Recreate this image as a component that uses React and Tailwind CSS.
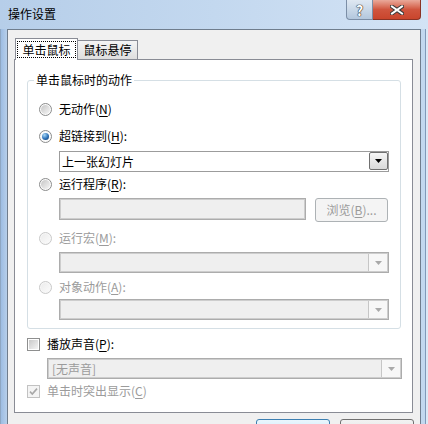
import React from "react";

// underlined access key letter
const Key = ({ children }) => (
  <span className="underline decoration-1 underline-offset-2">{children}</span>
);

const Radio = ({ checked, disabled }) => (
  <span
    className={`flex h-[13px] w-[13px] shrink-0 items-center justify-center rounded-full border ${
      disabled ? "border-[#c9c9c9] bg-[#f7f7f7]" : "border-[#8b8c8c] bg-[#fbfbfb]"
    }`}
  >
    {checked ? (
      <span className="h-[7px] w-[7px] rounded-full bg-[radial-gradient(circle_at_35%_30%,#a8d8f8,#2d72b8_55%,#0c2f58)]" />
    ) : (
      <span
        className={`h-[9px] w-[9px] rounded-full bg-gradient-to-br ${
          disabled ? "from-[#ececec] to-[#fafafa]" : "from-[#c6c6c6] to-[#f6f6f6]"
        }`}
      />
    )}
  </span>
);

const RadioRow = ({ children, checked, disabled, className }) => (
  <div
    className={`flex h-4 items-center gap-[7px] pl-[11px] ${
      disabled ? "text-[#9b9b9b]" : "text-black"
    } ${className}`}
  >
    <Radio checked={checked} disabled={disabled} />
    <span>{children}</span>
  </div>
);

const Arrow = ({ color }) => (
  <svg width="7" height="4" viewBox="0 0 7 4">
    <path d="M0 0h7L3.5 4z" fill={color} />
  </svg>
);

const Combo = ({ text, disabled, className }) =>
  disabled ? (
    <div
      className={`flex h-[21px] border border-[#acacac] bg-[#efefef] p-px shadow-[inset_0_0_0_1px_#cdcdcd] ${className}`}
    >
      <div className="flex-1 pl-[3px] leading-[17px] text-[#9b9b9b]">{text}</div>
      <div className="flex w-[19px] items-center justify-center border-l border-[#c6c6c6] bg-[#f7f7f7]">
        <Arrow color="#a9a9a9" />
      </div>
    </div>
  ) : (
    <div className={`flex h-[21px] border border-[#9c9c9c] bg-white ${className}`}>
      <div className="flex-1 pl-[2px] leading-[19px] text-black">{text}</div>
      <div className="flex h-[18px] w-[19px] items-center justify-center rounded-[2px] border border-[#707070] bg-gradient-to-b from-[#f6f6f6] to-[#d9d9d9]">
        <Arrow color="#000" />
      </div>
    </div>
  );

const Check = ({ checked, disabled }) => (
  <span
    className={`flex h-[13px] w-[13px] shrink-0 items-center justify-center border ${
      disabled ? "border-[#c2c2c2] bg-[#f4f4f4]" : "border-[#8e8f8f] bg-white"
    }`}
  >
    {checked ? (
      <svg width="11" height="11" viewBox="0 0 11 11">
        <path d="M2 5.6 4.3 8 9 2.6" fill="none" stroke="#a8a8a8" strokeWidth="1.6" />
      </svg>
    ) : (
      <span className="h-[9px] w-[9px] bg-gradient-to-br from-[#c9c9c9] to-[#f4f4f4]" />
    )}
  </span>
);

export default function App() {
  return (
    <div className="flex h-[424px] w-[428px] flex-col overflow-hidden bg-[#c3d8ef] font-['Noto_Sans_CJK_SC',sans-serif] text-[12px] leading-4 text-black">
      {/* title bar */}
      <div className="flex h-[29px] shrink-0 bg-gradient-to-r from-[#b6cee9] via-[#c3d8ef] to-[#d3e3f5]">
        <span className="ml-[8px] mt-[6px] h-4">操作设置</span>
        <div className="ml-auto mr-[7px] flex h-[20px]">
          <div className="flex w-[27px] items-center justify-center rounded-bl-[4px] border border-t-0 border-[#7b8ea6] bg-gradient-to-b from-[#dfe8f2] via-[#c9d8e8] to-[#b3c7dd]">
            <span className="text-[14px] font-bold leading-4 text-white [text-shadow:0_0_1px_#2b2b2b,0_0_1px_#2b2b2b,0_0_1px_#2b2b2b]">
              ?
            </span>
          </div>
          <div className="flex w-[48px] items-center justify-center rounded-br-[4px] border border-l-0 border-t-0 border-[#8a3325] bg-gradient-to-b from-[#e9a99a] via-[#d0553e] to-[#c9452c]">
            <svg width="14" height="10" viewBox="0 0 14 10">
              <path d="M2 1.5 12 8.5M12 1.5 2 8.5" stroke="#3a3a3a" strokeWidth="4" strokeLinecap="square" />
              <path d="M2 1.5 12 8.5M12 1.5 2 8.5" stroke="#fff" strokeWidth="2" strokeLinecap="square" />
            </svg>
          </div>
        </div>
      </div>

      <div className="flex min-h-0 flex-1">
        <div className="w-[7px] shrink-0 border-l border-[#8ea7c3] bg-gradient-to-r from-[#9dbde3] to-[#b7cfea]" />

        {/* client area */}
        <div className="w-[414px] shrink-0 border-x border-t border-[#6f7d8d] bg-[#f0f0f0] pl-[6px]">
          {/* tabs */}
          <div className="mt-[8px] flex h-[21px] items-end pl-px">
            <div className="relative z-10 -mb-px flex h-[22px] w-[63px] items-start border border-b-0 border-[#898c95] bg-white px-px pt-[2px]">
              <div className="flex h-[17px] flex-1 items-center justify-center border border-dotted border-black">
                单击鼠标
              </div>
            </div>
            <div className="flex h-[19px] w-[60px] items-center justify-center border border-b-0 border-l-0 border-[#898c95] bg-gradient-to-b from-[#f4f4f4] to-[#dedede]">
              鼠标悬停
            </div>
          </div>

          {/* tab panel */}
          <div className="h-[354px] w-[399px] border border-[#898c95] bg-white pl-[12px]">
            <fieldset className="mt-[12px] w-[374px] rounded-[3px] border border-[#d5dfe5]">
              <legend className="ml-[6px] px-[2px] leading-4">单击鼠标时的动作</legend>
              <div className="pb-[8px]">
                <RadioRow className="mt-[13px]">
                  无动作(<Key>N</Key>)
                </RadioRow>
                <RadioRow checked className="mt-[11px]">
                  超链接到(<Key>H</Key>):
                </RadioRow>
                <Combo text="上一张幻灯片" className="ml-[31px] mt-[7px] w-[330px]" />
                <RadioRow className="mt-[4px]">
                  运行程序(<Key>R</Key>):
                </RadioRow>
                <div className="ml-[31px] mt-[6px] flex items-start gap-[9px]">
                  <div className="h-[22px] w-[247px] border border-[#acacac] bg-[#efefef] shadow-[inset_0_0_0_1px_#cdcdcd]" />
                  <div className="flex h-[24px] w-[73px] items-center justify-center rounded-[3px] border border-[#adb2b5] bg-[#f4f4f4] text-[#9b9b9b]">
                    浏览(<Key>B</Key>)...
                  </div>
                </div>
                <RadioRow disabled className="mt-[8px]">
                  运行宏(<Key>M</Key>):
                </RadioRow>
                <Combo disabled text="" className="ml-[31px] mt-[6px] w-[330px]" />
                <RadioRow disabled className="mt-[6px]">
                  对象动作(<Key>A</Key>):
                </RadioRow>
                <Combo disabled text="" className="ml-[31px] mt-[4px] w-[330px]" />
              </div>
            </fieldset>

            <div className="mt-[7px] flex h-4 items-center gap-[7px]">
              <Check />
              <span>
                播放声音(<Key>P</Key>):
              </span>
            </div>
            <Combo disabled text="[无声音]" className="ml-[20px] mt-[6px] w-[355px]" />
            <div className="mt-[4px] flex h-4 items-center gap-[7px] text-[#9b9b9b]">
              <Check checked disabled />
              <span>
                单击时突出显示(<Key>C</Key>)
              </span>
            </div>
          </div>

          {/* dialog buttons, only their top edge is in view */}
          <div className="mt-[6px] flex justify-end gap-[10px] pr-[6px]">
            <div className="h-[23px] w-[74px] rounded-[3px] border border-[#3c7fb1] bg-gradient-to-b from-[#eaf6fd] to-[#bee6fd]" />
            <div className="h-[23px] w-[74px] rounded-[3px] border border-[#707070] bg-gradient-to-b from-[#f2f2f2] to-[#dddddd]" />
          </div>
        </div>

        <div className="flex w-[7px] shrink-0">
          <div className="w-[4px] bg-[#c2d8ef]" />
          <div className="w-px bg-[#7f9ab9]" />
          <div className="w-[2px] bg-[#dce8f5]" />
        </div>
      </div>
    </div>
  );
}
